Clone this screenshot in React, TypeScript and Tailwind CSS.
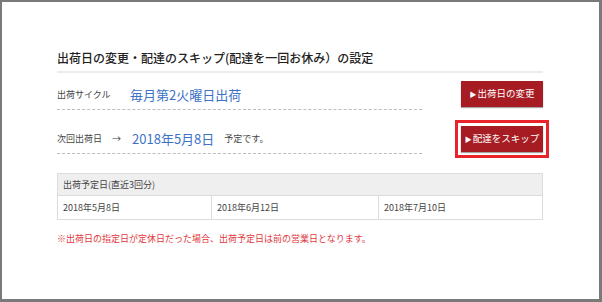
import React from 'react';

const dates = ['2018年5月8日', '2018年6月12日', '2018年7月10日'];

function RedButton({ label }: { label: string }) {
  return (
    <button className="flex h-[26px] w-[82px] items-center justify-center bg-[#a61c22] text-[9.5px] leading-none text-white shadow-[0_1px_1px_rgba(0,0,0,0.35)]">
      <span className="mr-[1px] text-[7px]">▶</span>
      {label}
    </button>
  );
}

export default function App() {
  return (
    <div
      className="box-border h-[302px] w-[602px] overflow-hidden border-t-2 border-l-2 border-r-[3px] border-b-[3px] border-[#7a7a7a] bg-white text-[#333]"
      style={{ fontFamily: '"Noto Sans CJK JP", "Noto Sans", sans-serif' }}
    >
      <div className="w-[486px] pl-[55px] pt-[48px] box-content">
        {/* title */}
        <div className="border-b-2 border-[#ececec] pb-[5px] text-[12px] font-medium leading-[16px] text-[#222]">
          出荷日の変更・配達のスキップ(配達を一回お休み）の設定
        </div>

        {/* shipping cycle */}
        <div className="flex items-start justify-between">
          <div className="flex w-[365px] items-center border-b border-dashed border-[#bdbdbd] pt-[14px] pb-[6px] leading-[16px]">
            <span className="w-[73px] text-[9px] text-[#444]">出荷サイクル</span>
            <span className="text-[13px] text-[#3d72c6]">毎月第2火曜日出荷</span>
          </div>
          <div className="mt-[8px]">
            <RedButton label="出荷日の変更" />
          </div>
        </div>

        {/* next shipping date */}
        <div className="flex items-start justify-between">
          <div className="flex w-[365px] items-center border-b border-dashed border-[#bdbdbd] pt-[21px] pb-[6px] leading-[16px]">
            <span className="text-[9px] text-[#444]">次回出荷日</span>
            <span className="ml-[10px] text-[9px] text-[#444]">→</span>
            <span className="ml-[11px] text-[13px] text-[#3d72c6]">2018年5月8日</span>
            <span className="ml-[10px] text-[9px] text-[#444]">予定です。</span>
          </div>
          <div className="-mr-[6px] mt-[10px] border-[3px] border-[#e8232b] p-[3px]">
            <RedButton label="配達をスキップ" />
          </div>
        </div>

        {/* schedule table */}
        <div className="mt-[15px] border border-[#dcdcdc] text-[9px] text-[#444]">
          <div className="flex h-[22px] items-center border-b border-[#dcdcdc] bg-[#efefef] pl-[5px]">
            出荷予定日(直近3回分)
          </div>
          <div className="grid h-[23px] grid-cols-[153px_167px_1fr]">
            {dates.map((d, i) => (
              <div
                key={d}
                className={`flex items-center pl-[5px] ${i > 0 ? 'border-l border-[#dcdcdc]' : ''}`}
              >
                {d}
              </div>
            ))}
          </div>
        </div>

        <p className="mt-[13px] text-[9px] leading-[12px] text-[#e2373c]">
          ※出荷日の指定日が定休日だった場合、出荷予定日は前の営業日となります。
        </p>
      </div>
    </div>
  );
}
